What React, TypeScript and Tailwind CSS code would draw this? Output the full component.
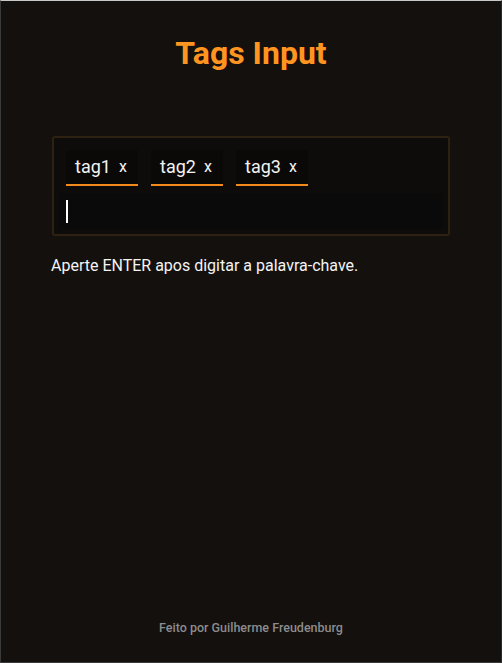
const tags = ["tag1", "tag2", "tag3"];

const App = () => {
  return (
    <div className="w-[502px] h-[663px] bg-[#13100e] text-white [font-family:Roboto,'Liberation_Sans',sans-serif] flex flex-col border-t border-t-[#c8c8c8] border-l border-l-[#3a3a3a] border-r border-r-[#2a2a2a] border-b border-b-[#3a3a3a]">
      <h1 className="mt-[35px] text-center text-[32px] leading-[34px] font-bold text-[#ff9520]">
        Tags Input
      </h1>
      <div className="mt-[66px] mx-[51px] border-2 border-[#2d2111] rounded-[3px] bg-[#0e0c0a] p-[5px]">
        <div className="flex gap-[13px] pl-[7px] pt-[7px]">
          {tags.map((t) => (
            <div
              key={t}
              className="w-[72px] h-[36px] bg-[#0b0908] border-b-2 border-[#f28a1c] flex items-center pl-[9px] gap-[8px]"
            >
              <span className="text-[18px] leading-none text-[#f2f2f2]">{t}</span>
              <span className="text-[16px] leading-none text-[#f2f2f2]">x</span>
            </div>
          ))}
        </div>
        <div className="mt-[7px] h-[36px] bg-[#0a0a0a] flex items-center pl-[7px]">
          <div className="w-[2px] h-[23px] bg-white" />
        </div>
      </div>
      <p className="mt-[20px] ml-[50px] text-[16px] leading-[20px] text-[#f4f4f4]">
        Aperte ENTER apos digitar a palavra-chave.
      </p>
      <p className="mt-auto mb-[27px] text-center text-[12.5px] leading-[14px] font-medium text-[#8c8c8c]">
        Feito por Guilherme Freudenburg
      </p>
    </div>
  );
};

export default App;
